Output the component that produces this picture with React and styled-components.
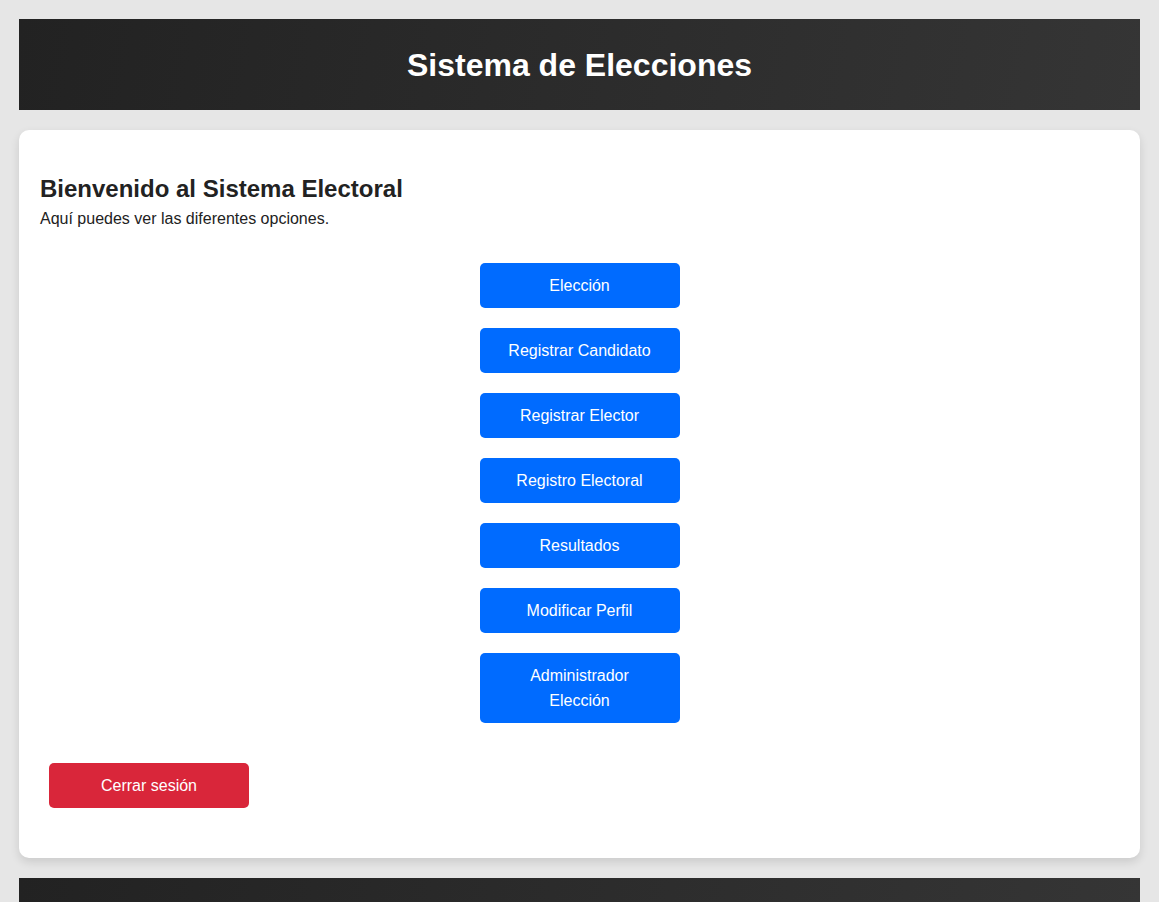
import React from "react";
import styled, { createGlobalStyle } from "styled-components";

const Global = createGlobalStyle`
  html, body { margin: 0; padding: 0; }
  body {
    background: #e6e6e6;
    font-family: "Liberation Sans", Arial, Helvetica, sans-serif;
    color: #222;
  }
`;

const Page = styled.div`
  padding: 19px 19px 0;
  display: flex;
  flex-direction: column;
  gap: 20px;
`;

const Header = styled.header`
  height: 91px;
  background: linear-gradient(100deg, #222 0%, #353535 100%);
  display: flex;
  align-items: center;
  justify-content: center;
`;

const Title = styled.h1`
  margin: 0;
  color: #fff;
  font-size: 32px;
  font-weight: 700;
  padding-top: 2px;
`;

const Card = styled.main`
  background: #fff;
  border-radius: 10px;
  box-shadow: 0 4px 10px rgba(0, 0, 0, 0.12);
  padding: 45px 21px 50px;
`;

const Heading = styled.h2`
  margin: 0;
  font-size: 24px;
  line-height: 28px;
  font-weight: 700;
  color: #222;
`;

const Sub = styled.p`
  margin: 5px 0 0;
  font-size: 16px;
  line-height: 22px;
  color: #222;
`;

const Menu = styled.nav`
  display: flex;
  flex-direction: column;
  align-items: center;
  gap: 20px;
  margin-top: 33px;
`;

const Btn = styled.button`
  width: 200px;
  border: none;
  border-radius: 5px;
  padding: 10px 20px;
  font-family: inherit;
  font-size: 16px;
  line-height: 25px;
  font-weight: 500;
  color: #fff;
  background: ${(p) => (p.$danger ? "#d9263a" : "#006bff")};
  text-align: center;
  cursor: pointer;
`;

const LogoutRow = styled.div`
  margin-top: 40px;
  padding-left: 9px;
`;

const Footer = styled.footer`
  height: 40px;
  background: linear-gradient(100deg, #222 0%, #353535 100%);
`;

const items = [
  "Elección",
  "Registrar Candidato",
  "Registrar Elector",
  "Registro Electoral",
  "Resultados",
  "Modificar Perfil",
  "Administrador Elección",
];

export default function App() {
  return (
    <>
      <Global />
      <Page>
        <Header>
          <Title>Sistema de Elecciones</Title>
        </Header>
        <Card>
          <Heading>Bienvenido al Sistema Electoral</Heading>
          <Sub>Aquí puedes ver las diferentes opciones.</Sub>
          <Menu>
            {items.map((t) => (
              <Btn key={t}>{t}</Btn>
            ))}
          </Menu>
          <LogoutRow>
            <Btn $danger>Cerrar sesión</Btn>
          </LogoutRow>
        </Card>
        <Footer />
      </Page>
    </>
  );
}
